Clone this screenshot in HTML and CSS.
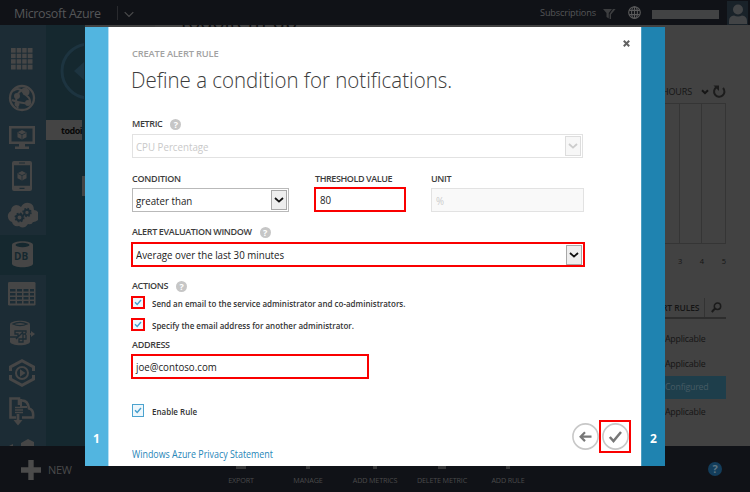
FILE: index.html
```html
<!DOCTYPE html>
<html lang="en">
<head>
<meta charset="utf-8">
<title>Microsoft Azure</title>
<link rel="stylesheet" href="styles.css">
</head>
<body>
<div class="portal">
  <header class="topbar">
    <span class="brand">Microsoft Azure</span>
    <span class="brand-divider"></span>
    <svg class="brand-chevron" width="10" height="7" viewBox="0 0 10 7"><path d="M.7 1.2 5 5.5 9.3 1.2" fill="none" stroke="#4b4b4c" stroke-width="1.2"/></svg>
    <span class="subs">Subscriptions</span>
    <svg class="filter" width="13" height="12" viewBox="0 0 13 12" fill="#3d3e40"><path d="M0 1h9L5.8 5v5.5L3.5 9V5z"/><path d="M10 1h2.6L8 6.5V11H6.6V6z"/></svg>
    <svg class="globe" width="13" height="13" viewBox="0 0 13 13" fill="none" stroke="#5a5a5b" stroke-width="1.1"><circle cx="6.5" cy="6.5" r="5.8"/><ellipse cx="6.5" cy="6.5" rx="2.9" ry="5.8"/><path d="M6.5.7v11.6M1.2 4.4h10.6M1.2 8.6h10.6"/></svg>
    <span class="account"></span>
    <svg class="avatar" width="21" height="24" viewBox="0 0 21 24"><path fill="#192229" d="M0 0h21v24H0z"/><g fill="#424446"><circle cx="11" cy="8.5" r="5"/><path d="M2 23v-3q0-5 5-5.5 4 2 8 0 5 .5 5 5.500V23z"/></g></svg>
  </header>
  <main class="workspace">
    <nav class="rail">
      <span class="rail-item"><svg width="22" height="22" viewBox="0 0 22 22" fill="#464646"><path d="M0 0h21.500v21.500H0z"/><path d="M5.200 0v22M10.700 0v22M16.200 0v22M0 5.200h22M0 10.700h22M0 16.200h22" stroke="#1c2c35" stroke-width="1"/></svg></span>
      <span class="rail-item"><svg width="28" height="28" viewBox="0 0 28 28" fill="none" stroke="#464646"><circle cx="14" cy="14" r="12" stroke-width="2.300"/><path d="M5 7q5-4 9 0l5 5q4 3 3 8M19 4q-8 2-10 8t1 12M4 16q8 4 16 3" stroke-width="2"/><g fill="#464646" stroke="none"><circle cx="18" cy="8" r="3.500"/><circle cx="9" cy="12" r="3"/><circle cx="20" cy="19" r="3"/><circle cx="9" cy="20" r="2.500"/></g></svg></span>
      <span class="rail-item"><svg width="27" height="25" viewBox="0 0 27 25" fill="#464646"><path fill-rule="evenodd" d="M0 1h26v18H0zM2.500 3.500v13h21v-13zM10 19h6v2.500h4V24H6v-2.500h4z"/><path d="m13 5 4.500 2.300v5L13 14.600l-4.500-2.300v-5z"/><path d="m9 7.700 4 2 4-2M13 9.700V14" fill="none" stroke="#1c2c35" stroke-width=".8"/></svg></span>
      <span class="rail-item"><svg width="20" height="31" viewBox="0 0 20 31" fill="#464646"><path fill-rule="evenodd" d="M2 0h16q2 0 2 2v26q0 2-2 2H2q-2 0-2-2V2q0-2 2-2zM2 4.200v20.500h16V4.200z"/><path d="m10 10 4.500 2.200v5L10 19.500l-4.500-2.300v-5z"/><path d="m6 12.600 4 2 4-2M10 14.600V19" fill="none" stroke="#1c2c35" stroke-width=".8"/><path d="M7 2h6M7.500 27.300h5" stroke="#1c2c35" stroke-width="1.200"/></svg></span>
      <span class="rail-item"><svg width="31" height="27" viewBox="0 0 31 27"><path fill="#464646" d="M5 20a6 6 0 0 1-1-11q0-5 5-6 3 0 5 2 3-5 8-4 5 1 5 7a6 6 0 0 1-1 12q-1 3-5 2-4 6-9 2-6 1-7-4z"/><g fill="none" stroke="#1c2c35"><circle cx="12.500" cy="15.500" r="3" stroke-width="2"/><circle cx="12.500" cy="15.500" r="4.300" stroke-width="1.400" stroke-dasharray="1.700 1.680"/><circle cx="20" cy="10.500" r="2.700" stroke-width="2"/><circle cx="20" cy="10.500" r="4" stroke-width="1.400" stroke-dasharray="1.570 1.570"/></g></svg></span>
      <span class="rail-item rail-current"><svg width="21" height="27" viewBox="0 0 21 27"><path fill="#464646" d="M0 4C0-1 21-1 21 4v18.500c0 5-21 5-21 0z"/><ellipse cx="10.500" cy="4" rx="7" ry="2.200" fill="#15282f"/></svg><b>DB</b></span>
      <span class="rail-item"><svg width="28" height="24" viewBox="0 0 28 24"><rect width="27.500" height="23.500" rx="1.200" fill="#464646"/><path d="M2 8.200h5.500M9 8.200h5M15.500 8.200h5M22 8.200h4M2 12.200h5.500M9 12.200h5M15.500 12.200h5M22 12.200h4M2 16.200h5.500M9 16.200h5M15.500 16.200h5M22 16.200h4M2 20.200h5.500M9 20.200h5M15.500 20.200h5M22 20.200h4" stroke="#1c2c35" stroke-width="2.600"/></svg></span>
      <span class="rail-item"><svg width="26" height="26" viewBox="0 0 26 26"><path fill="#464646" d="M1 4.500c0-5 20-5 20 0v17c0 5-20 5-20 0z"/><path d="M4 4c4 2 10 2 14 0-4-2-10-2-14 0zM1 17h8v-3H6v-3h11v8h-7v3h4v-8h3M7 19l7-7" fill="none" stroke="#1c2c35" stroke-width="1.300"/><path d="M17 14h6" stroke="#464646" stroke-width="1.500"/><path fill="#464646" d="m22 11 4 3-4 3z"/></svg></span>
      <span class="rail-item"><svg width="26" height="28" viewBox="0 0 26 28" fill="none" stroke="#464646"><path d="M1.500 12V8L13 1.800 24.500 8v4M1.500 16v4L13 26.200 24.500 20v-4" stroke-width="3"/><circle cx="13" cy="14" r="6" stroke-width="2"/><path fill="#464646" stroke="none" d="m11 10.200 5.500 3.800-5.500 3.800z"/></svg></span>
      <span class="rail-item"><svg width="26" height="30" viewBox="0 0 26 30" fill="none" stroke="#464646"><path d="M7 20.500H1.500v-19H10V8M13 3.500q6 0 7 8 5 1 4 9H13" stroke-width="2.600"/><path d="M12 2v8h6" stroke-width="2"/><path d="M6 10.500h8M6 13h8M6 15.500h8" stroke-width="1.400"/><path d="M9 17v8" stroke-width="2.800"/><path fill="#464646" stroke="none" d="M4.500 23h9L9 28.500z"/></svg></span>
      <span class="rail-item rail-last"><svg width="26" height="8" viewBox="0 0 26 8"><path fill="#464646" d="M12 4 19 0l6 3v5H12zM0 7l4-2v3H0z"/></svg></span>
    </nav>
    <section class="drawer">
      <svg class="back" width="38" height="60" viewBox="0 0 38 60"><circle cx="43" cy="30" r="27" fill="none" stroke="#1d3440" stroke-width="3"/><path fill="#1d3440" d="m28 30 10-9v18z"/></svg>
      <span class="tab">todoi</span>
      <span class="card-edge"></span>
    </section>
    <section class="content">
      <div class="page-title"><span>todoitem-db</span></div>
      <div class="monitor">
        <div class="range"><span>HOURS</span><svg width="8" height="6" viewBox="0 0 8 6"><path d="m1 1.200 3 3 3-3" fill="none" stroke="#161616" stroke-width="2"/></svg><svg width="14" height="14" viewBox="0 0 14 14"><path d="M4.500 2.200A5.200 5.200 0 1 0 11 3" fill="none" stroke="#1c1c1c" stroke-width="2"/><path fill="#1c1c1c" d="M1.500.5H7V6z"/></svg></div>
        <div class="chart"><i></i><i></i><i></i></div>
        <div class="axis"><span>3</span><span>4</span><span>5</span></div>
        <div class="rules-head"><span>RT RULES</span><i></i><svg width="11" height="11" viewBox="0 0 11 11" fill="none" stroke="#1b1b1b"><circle cx="6.500" cy="4.200" r="3.200" stroke-width="1.500"/><path d="M4 6.500.8 10" stroke-width="2"/></svg></div>
        <div class="rule">Applicable</div>
        <div class="rule">Applicable</div>
        <div class="rule rule-selected">Configured</div>
        <div class="rule">Applicable</div>
      </div>
    </section>
  </main>
  <footer class="commands">
    <svg class="plus" width="20" height="20" viewBox="0 0 20 20"><path d="M10 0v20M0 10h20" stroke="#4b4b4b" stroke-width="5.400"/></svg>
    <span class="new">NEW</span>
    <div class="command c1"><i></i><span>EXPORT</span></div>
    <div class="command c2"><i></i><span>MANAGE</span></div>
    <div class="command c3"><i></i><span>ADD METRICS</span></div>
    <div class="command c4"><i></i><span>DELETE METRIC</span></div>
    <div class="command c5"><i></i><span>ADD RULE</span></div>
    <span class="help">?</span>
  </footer>
</div>

<div class="dialog">
  <div class="step step-one"><span>1</span></div>
  <div class="panel">
    <div class="eyebrow"><span>CREATE ALERT RULE</span>
      <svg class="close" width="7" height="7" viewBox="0 0 7 7"><path d="m.8.800 5.400 5.400M6.200.8.800 6.200" stroke="#626262" stroke-width="2"/></svg>
    </div>
    <h1>Define a condition for notifications.</h1>
    <div class="label l-metric"><span>METRIC</span><i class="hint">?</i></div>
    <div class="field select disabled metric"><span>CPU Percentage</span><b class="arrow"><svg width="10" height="6" viewBox="0 0 10 6"><path d="m1 1 4 3.600L9 1"/></svg></b></div>
    <div class="row">
      <div class="col-condition">
        <div class="label l-condition"><span>CONDITION</span></div>
        <div class="field select condition"><span>greater than</span><b class="arrow"><svg width="10" height="6" viewBox="0 0 10 6"><path d="m1 1 4 3.600L9 1"/></svg></b></div>
      </div>
      <div class="col-threshold">
        <div class="label l-threshold"><span>THRESHOLD VALUE</span></div>
        <div class="field threshold marked"><span>80</span></div>
      </div>
      <div class="col-unit">
        <div class="label l-unit"><span>UNIT</span></div>
        <div class="field unit"><span>%</span></div>
      </div>
    </div>
    <div class="label l-window"><span>ALERT EVALUATION WINDOW</span><i class="hint">?</i></div>
    <div class="field select window marked"><span>Average over the last 30 minutes</span><b class="arrow"><svg width="10" height="6" viewBox="0 0 10 6"><path d="m1 1 4 3.600L9 1"/></svg></b></div>
    <div class="label l-actions"><span>ACTIONS</span><i class="hint">?</i></div>
    <div class="check check-marked"><b><svg width="8" height="7" viewBox="0 0 8 7"><path d="m1 3.200 2.200 2.300L7 1"/></svg></b><span>Send an email to the service administrator and co-administrators.</span></div>
    <div class="check check-marked second"><b><svg width="8" height="7" viewBox="0 0 8 7"><path d="m1 3.200 2.200 2.300L7 1"/></svg></b><span>Specify the email address for another administrator.</span></div>
    <div class="label l-address"><span>ADDRESS</span></div>
    <div class="field address marked"><span>joe@contoso.com</span></div>
    <div class="check enable"><b><svg width="8" height="7" viewBox="0 0 8 7"><path d="m1 3.200 2.200 2.300L7 1"/></svg></b><span>Enable Rule</span></div>
    <div class="buttons">
      <svg width="27" height="27" viewBox="0 0 27 27" fill="none"><circle cx="13.500" cy="13.500" r="12.600" stroke="#c8c8c8" stroke-width="1.600"/><path d="M19.500 13.700H9M13 9.300l-4.400 4.400 4.400 4.400" stroke="#777" stroke-width="2.200"/></svg>
      <span class="finish"><svg width="27" height="27" viewBox="0 0 27 27" fill="none"><circle cx="13.500" cy="13.500" r="12.600" stroke="#c8c8c8" stroke-width="1.600"/><path d="m7.800 14 3.700 4L19 9" stroke="#777" stroke-width="2.500"/></svg></span>
    </div>
    <a class="privacy">Windows Azure Privacy Statement</a>
  </div>
  <div class="step step-two"><span>2</span></div>
</div>
</body>
</html>
```
FILE: styles.css
```css
* { box-sizing: border-box; }
body { margin: 0; width: 750px; height: 492px; overflow: hidden; font-family: "Open Sans", "Noto Sans", sans-serif; background: #424242; }
svg { display: block; flex: none; }
i { font-style: normal; }
span { white-space: nowrap; }

.portal { width: 750px; height: 492px; display: flex; flex-direction: column; overflow: hidden; }
.topbar { height: 25px; flex: none; background: #101217; display: flex; align-items: center; padding-left: 14px; color: #555657; }
.brand { width: 103px; padding-top: 1px; font-size: 12.500px; letter-spacing: -.35px; }
.brand-divider { width: 1px; height: 14px; background: #292a2e; margin-right: 6px; }
.subs { width: 63px; margin-left: 406px; font-size: 9.200px; letter-spacing: -.15px; }
.brand-chevron { margin-top: 4px; }
.filter { margin-top: 2px; }
.globe { margin-left: 12px; }
.account { width: 67px; height: 9px; margin: 4px 8px 0 11px; background: #424344; }
.workspace { height: 421px; flex: none; display: flex; overflow: hidden; }

.rail { width: 46px; flex: none; background: #1c2c35; padding-top: 14px; }
.rail-item { height: 39.250px; display: flex; align-items: center; justify-content: center; padding-right: 2px; position: relative; }
.rail-current { background: #15282f; }
.rail-current b { position: absolute; left: 14px; top: 14px; font-size: 10px; line-height: 14px; color: #15282f; }
.rail-last { height: 8px; margin-top: 7px; }
.drawer { width: 39px; flex: none; background: #15282f; padding-top: 16px; overflow: hidden; }
.tab { display: block; width: 36px; height: 20px; margin-top: 19px; padding-left: 15px; background: #444; color: #080808; font-size: 9px; line-height: 21px; font-weight: 700; letter-spacing: -.5px; }
.card-edge { display: block; width: 3px; height: 20px; margin: 36px 0 0 36px; background: #444; }
.content { flex: 1; padding-right: 24px; }
.page-title { height: 2px; width: 145px; margin-left: 70px; overflow: hidden; background: #464646; padding-left: 26px; font-size: 20px; font-weight: 400; color: #151515; }
.page-title span { display: block; margin-top: -13px; line-height: 20px; }
.monitor { width: 68px; margin-left: auto; padding-top: 55px; color: #151515; }
.range { height: 21px; padding-bottom: 2px; display: flex; align-items: center; font-size: 9px; letter-spacing: -.15px; }
.range span { width: 45px; margin-left: 4px; }
.range svg + svg { margin-left: 3px; }
.chart { height: 141px; border: 1px solid #353535; border-left: 0; display: flex; }
.chart i { width: 23px; border-right: 1px solid #353535; }
.chart i:last-child { border: 0; }
.chart i:first-child { width: 22px; }
.axis { height: 34px; padding: 10px 0 0 20px; display: flex; justify-content: space-between; font-size: 7.500px; line-height: 14px; }
.rules-head { height: 22px; margin-top: 19px; display: flex; align-items: center; border-bottom: 2px solid #2d2d2d; font-size: 8.500px; font-weight: 600; letter-spacing: -.1px; }
.rules-head span { width: 42px; margin-left: 4px; }
.rules-head i { width: 1px; height: 19px; background: #333; margin-right: 6px; }
.rule { height: 24.500px; line-height: 24px; font-size: 8.800px; margin-left: 7px; letter-spacing: -.2px; }
.rules-head + .rule { margin-top: 8px; }
.rule-selected { margin: 0; padding-left: 7px; height: 23px; line-height: 23px; background: #1e3e4b; color: #465b64; }
.rule-selected + .rule { margin-top: 1px; }

.commands { flex: 1; background: #101217; display: flex; padding-left: 21px; color: #4a4a4b; }
.plus { margin-top: 14px; }
.new { width: 187px; padding-left: 7px; line-height: 48px; font-size: 11px; letter-spacing: -.3px; }
.command { width: 26px; display: flex; flex-direction: column; align-items: center; padding-top: 20px; font-size: 7.200px; line-height: 8px; letter-spacing: -.15px; }
.command i { width: 4px; height: 3px; background: #363738; margin-bottom: 7px; }
.c1 i { width: 10px; }
.c2 { margin-left: 41px; }
.c3 { margin-left: 41px; }
.c4 { margin-left: 41px; }
.c4 i { width: 8px; }
.c5 { margin-left: 40px; }
.help { width: 14px; height: 14px; margin: 16px 28px 0 auto; border-radius: 50%; background: #133d5b; color: #5f7481; text-align: center; font-size: 11px; line-height: 14px; font-weight: 700; }

.dialog { position: absolute; left: 85px; top: 27px; width: 580px; height: 439px; display: flex; background: #fff; }
.step { width: 24px; flex: none; display: flex; align-items: flex-end; justify-content: center; padding-bottom: 18px; color: #fff; font-size: 12px; line-height: 18px; font-weight: 700; }
.step-one { background: #52b5e0; border-right: 1px solid #b7e0f3; }
.step-two { background: #1f83b0; border-left: 1px solid #4c9dc1; }
.panel { width: 532px; padding: 20px 0 0 23px; position: relative; color: #333; }
.eyebrow { height: 14px; display: flex; justify-content: space-between; font-size: 9.300px; line-height: 14px; font-weight: 600; color: #a2a2a2; letter-spacing: -.15px; }
.close { margin: -7px 11px 0 0; }

/* Condensed text, scaled from its left edge */
h1, .field span, .check span, .privacy { transform: scaleX(.9); transform-origin: left center; }
h1 { margin: 0 0 0 -1px; height: 40px; font-size: 22.500px; line-height: 38px; font-weight: 300; color: #3c3c3c; white-space: nowrap; transform: scaleX(.91); }
.label { height: 14px; display: flex; align-items: center; font-size: 9px; line-height: 14px; font-weight: 600; letter-spacing: -.36px; color: #3c3c3c; white-space: nowrap; }
.hint { width: 11px; height: 11px; margin-left: 8px; border-radius: 50%; background: #c6c6c6; color: #fff; font-size: 9px; line-height: 11px; text-align: center; font-weight: 700; letter-spacing: 0; }
.l-metric { margin-top: 16px; }
.l-condition { letter-spacing: -.25px; }
.l-threshold { margin-left: 1px; letter-spacing: -.42px; }
.l-address { margin-top: 7px; letter-spacing: -.3px; }
.field { height: 25px; display: flex; align-items: center; font-size: 10.800px; color: #222; border: 1px solid #b9b9b9; padding: 0 0 0 3px; white-space: nowrap; }
.select { justify-content: space-between; padding: 0 1px 0 3px; }
.arrow { width: 16px; height: 20px; display: flex; align-items: center; justify-content: center; border: 1px solid #a8a8a8; background: #eee; }
.arrow path { fill: none; stroke: #111; stroke-width: 1.800; }
.disabled { color: #c9c9c9; border-color: #e2e2e2; }
.disabled .arrow { border-color: #ddd; background: #f7f7f7; }
.disabled .arrow path { stroke: #ccc; }
.metric { width: 451px; height: 24px; margin-top: 3px; }
.metric span, .condition span { padding-top: 1px; }
.row { display: flex; margin-top: 14px; height: 41px; }
.condition { width: 157px; height: 24px; margin-top: 2px; }
.col-condition { width: 182px; }
.col-threshold { width: 117px; }
.marked { border: 2px solid #fa0000; }
.threshold { width: 92px; margin-top: 1px; padding-left: 4px; }
.unit { width: 153px; height: 24px; margin-top: 2px; padding-left: 4px; background: #f9f9f9; border-color: #e2e2e2; color: #ccc; }
.l-window { margin-top: 12px; }
.window { width: 454px; margin: 3px 0 0 -1px; }
.l-actions { margin-top: 12px; }
.check { height: 13px; display: flex; align-items: center; font-size: 8.900px; font-weight: 600; }
.check span { padding-top: 2px; }
.check b { width: 12px; height: 13px; margin-right: 8px; display: flex; align-items: center; justify-content: center; background: #eef7fc; border: 1px solid #4ca3cf; }
.check path { fill: none; stroke: #439dcc; stroke-width: 1.400; }
.check-marked { margin: 3px 0 0 -1px; }
.check-marked b { width: 14px; margin-right: 7px; border: 2px solid #fa0000; }
.second { margin-top: 9px; }
.address { width: 238px; margin: 2px 0 0 -1px; }
.enable { margin-top: 25px; }
.buttons { margin: 3px 10px 0 0; display: flex; justify-content: flex-end; align-items: center; height: 33px; }
.finish { width: 32px; height: 33px; display: flex; align-items: center; justify-content: center; border: 2px solid #fa0000; }
.finish svg { margin-top: -1px; }
.privacy { position: absolute; left: 23px; bottom: 5px; font-size: 9.900px; line-height: 14px; color: #2786b8; white-space: nowrap; }
```
